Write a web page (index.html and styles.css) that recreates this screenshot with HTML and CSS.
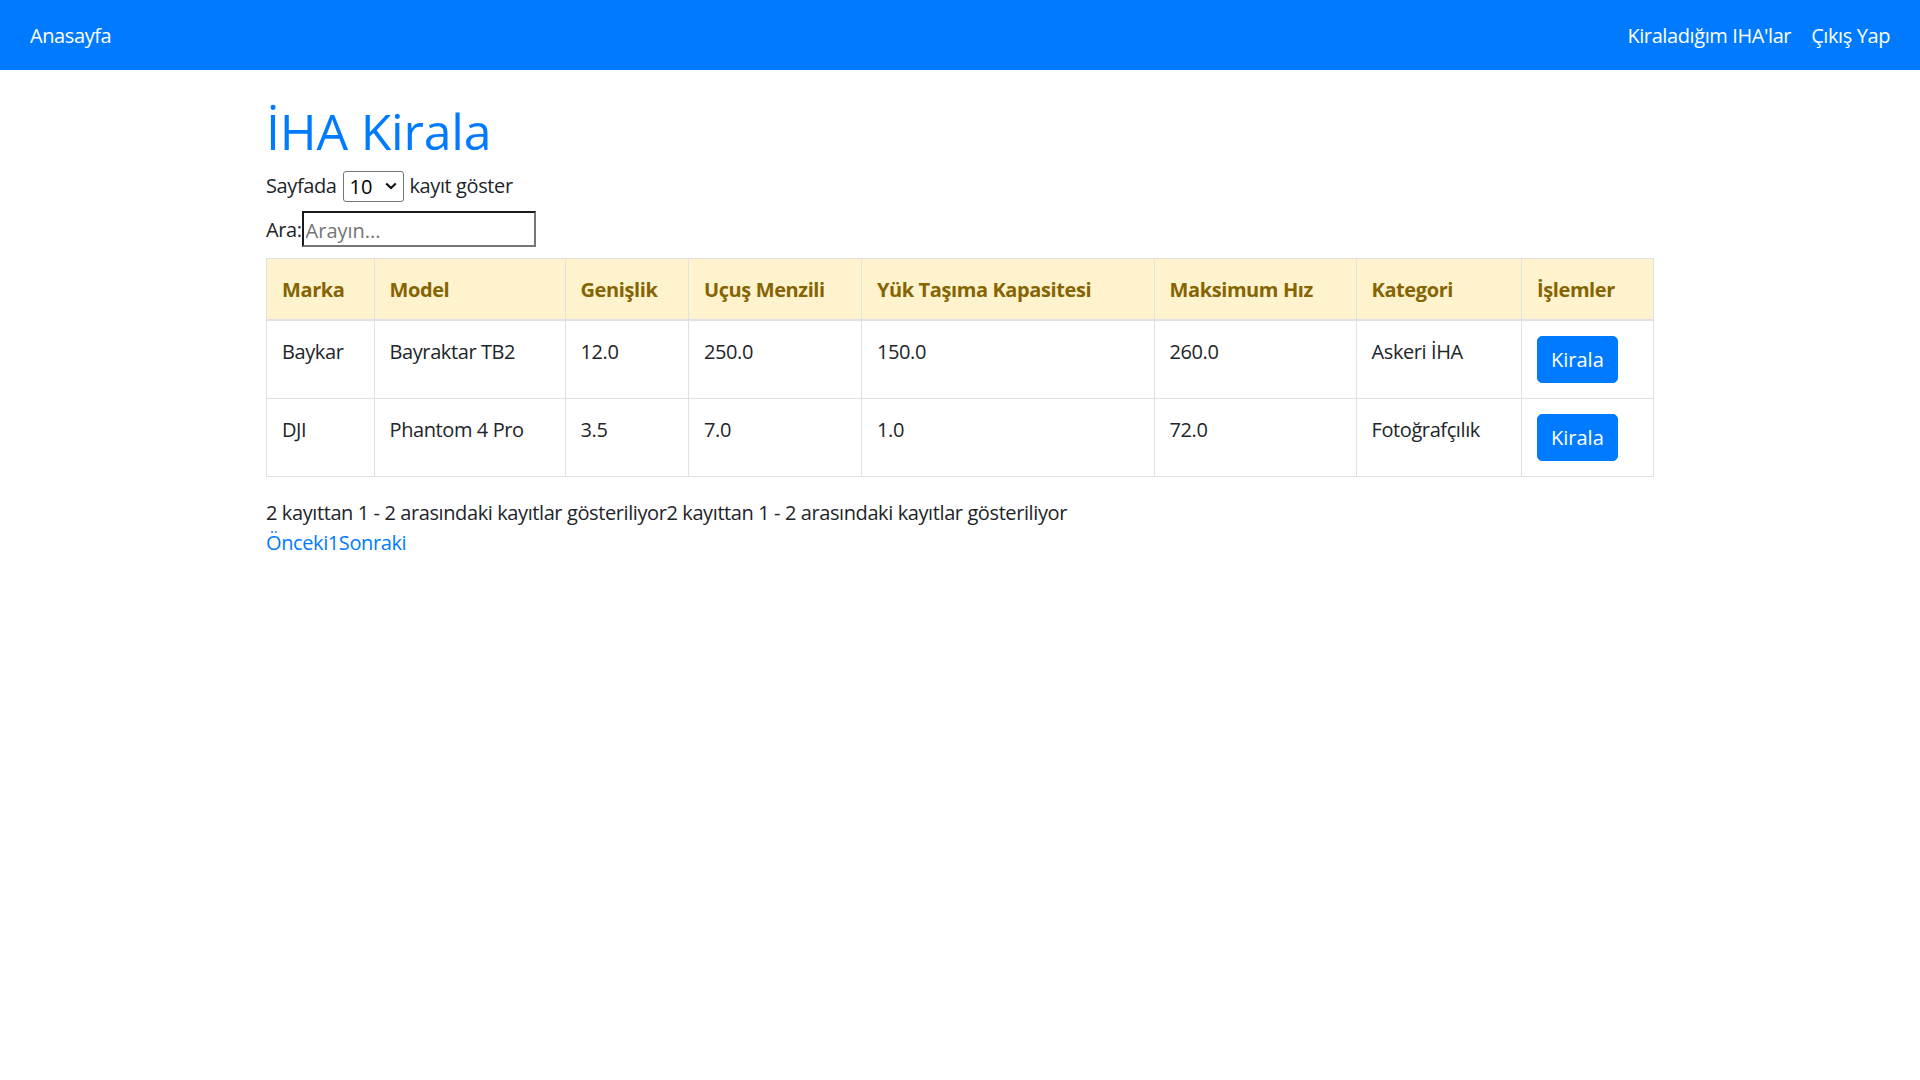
FILE: index.html
```html
<!DOCTYPE html>
<html lang="tr">
<head>
<meta charset="utf-8">
<title>İHA Kirala</title>
<link rel="stylesheet" href="styles.css">
</head>
<body>
<nav class="navbar">
  <a class="nav-link" href="#">Anasayfa</a>
  <div class="nav-right">
    <a class="nav-link" href="#">Kiraladığım IHA'lar</a>
    <a class="nav-link" href="#">Çıkış Yap</a>
  </div>
</nav>
<main class="container">
  <h1 class="title">İHA Kirala</h1>
  <div class="length">
    <span>Sayfada</span>
    <span class="select-wrap">
      <select class="select"><option>10</option><option>25</option><option>50</option></select>
      <svg class="chev" width="12" height="8" viewBox="0 0 12 8"><path d="M1.2 1.5 L6 6 L10.8 1.5" fill="none" stroke="#111" stroke-width="2.2"/></svg>
    </span>
    <span>kayıt göster</span>
  </div>
  <div class="filter">
    <label for="q">Ara:</label><input id="q" class="search" type="text" placeholder="Arayın...">
  </div>
  <table class="table">
    <colgroup>
      <col class="c1"><col class="c2"><col class="c3"><col class="c4"><col class="c5"><col class="c6"><col class="c7"><col class="c8">
    </colgroup>
    <thead>
      <tr>
        <th>Marka</th><th>Model</th><th>Genişlik</th><th>Uçuş Menzili</th><th>Yük Taşıma Kapasitesi</th><th>Maksimum Hız</th><th>Kategori</th><th>İşlemler</th>
      </tr>
    </thead>
    <tbody>
      <tr>
        <td>Baykar</td><td>Bayraktar TB2</td><td>12.0</td><td>250.0</td><td>150.0</td><td>260.0</td><td>Askeri İHA</td><td><button class="btn">Kirala</button></td>
      </tr>
      <tr>
        <td>DJI</td><td>Phantom 4 Pro</td><td>3.5</td><td>7.0</td><td>1.0</td><td>72.0</td><td>Fotoğrafçılık</td><td><button class="btn">Kirala</button></td>
      </tr>
    </tbody>
  </table>
  <div class="info">2 kayıttan 1 - 2 arasındaki kayıtlar gösteriliyor2 kayıttan 1 - 2 arasındaki kayıtlar gösteriliyor</div>
  <div class="paging"><a href="#">Önceki</a><a href="#">1</a><a href="#">Sonraki</a></div>
</main>
</body>
</html>
```
FILE: styles.css
```css
* { box-sizing: border-box; }
body {
  margin: 0;
  font-family: "Open Sans", "Noto Sans", sans-serif;
  font-size: 20px;
  line-height: 30px;
  letter-spacing: -0.4px;
  color: #212529;
  background: #fff;
}
.navbar {
  height: 70px;
  background: #007bff;
  display: flex;
  align-items: center;
  justify-content: space-between;
  padding: 2px 20px 0;
}
.nav-right { display: flex; }
.nav-link {
  color: #fff;
  text-decoration: none;
  padding: 0 10px;
  line-height: 30px;
}
.container {
  width: 1388px;
  margin: 31px auto 0;
}
.title {
  margin: 0 0 9px;
  font-size: 50px;
  line-height: 60px;
  font-weight: 500;
  letter-spacing: -0.2px;
  color: #007bff;
}
.length {
  display: flex;
  align-items: center;
  gap: 6px;
  height: 31px;
  margin-bottom: 10px;
  padding-top: 1px;
}
.select-wrap { position: relative; display: inline-flex; }
.select {
  appearance: none;
  -webkit-appearance: none;
  width: 61px;
  height: 31px;
  border: 1px solid #767676;
  border-radius: 3px;
  background: #fff;
  font: inherit;
  font-size: 20px;
  line-height: 29px;
  padding: 0 0 0 6px;
  color: #000;
}
.chev { position: absolute; right: 7px; top: 11px; pointer-events: none; }
.filter {
  display: flex;
  align-items: center;
  height: 36px;
  margin-bottom: 11px;
}
.filter label { padding-top: 2px; }
.search {
  width: 234px;
  height: 36px;
  border: 2px solid #767676;
  border-top-color: #1a1a1a;
  border-left-color: #1a1a1a;
  padding: 2px 2px 0;
  font: inherit;
  font-size: 20px;
  color: #212529;
  outline: none;
}
.search::placeholder { color: #757575; }
.table {
  width: 1387px;
  table-layout: fixed;
  border-collapse: collapse;
  margin-bottom: 20px;
  border: 1px solid #dee2e6;
}
.c1 { width: 107.5px; }
.c2 { width: 191px; }
.c3 { width: 123.5px; }
.c4 { width: 173px; }
.c5 { width: 292.5px; }
.c6 { width: 202px; }
.c7 { width: 165.5px; }
.c8 { width: 132px; }
.table th, .table td {
  padding: 16px 15px 14px;
  border: 1px solid #dee2e6;
  text-align: left;
  vertical-align: top;
}
.table td:last-child { padding-top: 15px; padding-bottom: 15px; }
.table thead th {
  background: #fff3cd;
  color: #856404;
  font-weight: 700;
  border-bottom: 2px solid #dee2e6;
}
.btn {
  font: inherit;
  font-size: 20px;
  line-height: 30px;
  color: #fff;
  background: #007bff;
  border: 1px solid #007bff;
  border-radius: 5px;
  padding: 8px 13px 7px;
  cursor: pointer;
}
.info { padding-top: 1px; }
.paging a { color: #007bff; text-decoration: none; }
```
